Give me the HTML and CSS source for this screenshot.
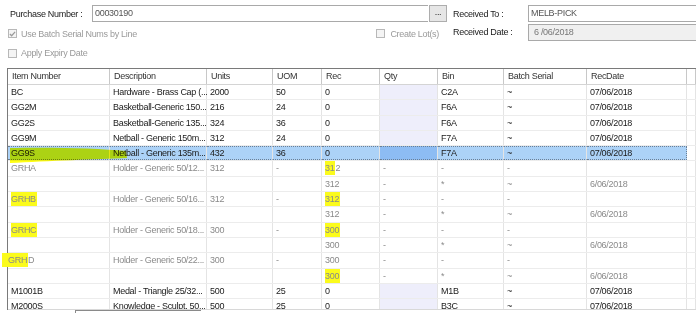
FILE: index.html
```html
<!DOCTYPE html>
<html lang="en">
<head>
    <meta charset="UTF-8">
    <title>Receive Purchase</title>
    <link rel="stylesheet" href="styles.css">
</head>
<body>
    <div class="form">
        <div class="frow r1">
            <div class="left">
                <span class="lbl first">Purchase Number :</span>
                <div class="box po">00030190</div>
                <span class="dots">...</span>
            </div>
            <span class="lbl rlbl">Received To :</span>
            <div class="box">MELB-PICK</div>
        </div>
        <div class="frow r2">
            <div class="left">
                <span class="chk on"><svg width="8" height="8" viewBox="0 0 8 8"><path d="M1 4 L3 6 L7 1.5" fill="none" stroke="#9a9a9a" stroke-width="1.4"/></svg></span>
                <span class="dis">Use Batch Serial Nums by Line</span>
                <span class="chk lot"></span>
                <span class="dis">Create Lot(s)</span>
            </div>
            <span class="lbl rlbl">Received Date :</span>
            <div class="box off">6 /06/2018</div>
        </div>
        <div class="frow r3">
            <span class="chk"></span>
            <span class="dis">Apply Expiry Date</span>
        </div>
    </div>

    <div class="grid">
        <svg class="swoosh" width="130" height="20" viewBox="0 0 130 20">
            <path d="M2 1 C40 0 90 1 118 4 L119 11 C90 12 40 14 2 16 Z" fill="#ffff14"/>
        </svg>
        <div class="row head">
            <span class="c">Item Number</span><span class="c">Description</span><span class="c">Units</span><span class="c">UOM</span><span class="c">Rec</span><span class="c">Qty</span><span class="c">Bin</span><span class="c">Batch Serial</span><span class="c">RecDate</span><span class="c"></span>
        </div>
        <div class="row">
            <span class="c">BC</span><span class="c">Hardware - Brass Cap (...</span><span class="c">2000</span><span class="c">50</span><span class="c">0</span><span class="c qty"></span><span class="c">C2A</span><span class="c">~</span><span class="c">07/06/2018</span><span class="c"></span>
        </div>
        <div class="row">
            <span class="c">GG2M</span><span class="c">Basketball-Generic 150...</span><span class="c">216</span><span class="c">24</span><span class="c">0</span><span class="c qty"></span><span class="c">F6A</span><span class="c">~</span><span class="c">07/06/2018</span><span class="c"></span>
        </div>
        <div class="row">
            <span class="c">GG2S</span><span class="c">Basketball-Generic 135...</span><span class="c">324</span><span class="c">36</span><span class="c">0</span><span class="c qty"></span><span class="c">F6A</span><span class="c">~</span><span class="c">07/06/2018</span><span class="c"></span>
        </div>
        <div class="row">
            <span class="c">GG9M</span><span class="c">Netball - Generic 150m...</span><span class="c">312</span><span class="c">24</span><span class="c">0</span><span class="c qty"></span><span class="c">F7A</span><span class="c">~</span><span class="c">07/06/2018</span><span class="c"></span>
        </div>
        <div class="row sel">
            <span class="c">GG9S</span><span class="c">Netball - Generic 135m...</span><span class="c">432</span><span class="c">36</span><span class="c">0</span><span class="c qty"></span><span class="c">F7A</span><span class="c">~</span><span class="c end">07/06/2018</span><span class="c"></span>
        </div>
        <div class="row grey">
            <span class="c">GRHA</span><span class="c">Holder - Generic 50/12...</span><span class="c">312</span><span class="c">-</span><span class="c"><span class="hl">31</span>2</span><span class="c">-</span><span class="c">-</span><span class="c">-</span><span class="c"></span><span class="c"></span>
        </div>
        <div class="row grey">
            <span class="c"></span><span class="c"></span><span class="c"></span><span class="c"></span><span class="c">312</span><span class="c">-</span><span class="c">*</span><span class="c">~</span><span class="c">6/06/2018</span><span class="c"></span>
        </div>
        <div class="row grey">
            <span class="c"><span class="hl">GRHB</span></span><span class="c">Holder - Generic 50/16...</span><span class="c">312</span><span class="c">-</span><span class="c"><span class="hl">312</span></span><span class="c">-</span><span class="c">-</span><span class="c">-</span><span class="c"></span><span class="c"></span>
        </div>
        <div class="row grey">
            <span class="c"></span><span class="c"></span><span class="c"></span><span class="c"></span><span class="c">312</span><span class="c">-</span><span class="c">*</span><span class="c">~</span><span class="c">6/06/2018</span><span class="c"></span>
        </div>
        <div class="row grey">
            <span class="c"><span class="hl">GRHC</span></span><span class="c">Holder - Generic 50/18...</span><span class="c">300</span><span class="c">-</span><span class="c"><span class="hl">300</span></span><span class="c">-</span><span class="c">-</span><span class="c">-</span><span class="c"></span><span class="c"></span>
        </div>
        <div class="row grey">
            <span class="c"></span><span class="c"></span><span class="c"></span><span class="c"></span><span class="c">300</span><span class="c">-</span><span class="c">*</span><span class="c">~</span><span class="c">6/06/2018</span><span class="c"></span>
        </div>
        <div class="row grey">
            <span class="c"><span class="hl wide">GRH</span>D</span><span class="c">Holder - Generic 50/22...</span><span class="c">300</span><span class="c">-</span><span class="c">300</span><span class="c">-</span><span class="c">-</span><span class="c">-</span><span class="c"></span><span class="c"></span>
        </div>
        <div class="row grey">
            <span class="c"></span><span class="c"></span><span class="c"></span><span class="c"></span><span class="c"><span class="hl">300</span></span><span class="c">-</span><span class="c">*</span><span class="c">~</span><span class="c">6/06/2018</span><span class="c"></span>
        </div>
        <div class="row">
            <span class="c">M1001B</span><span class="c">Medal - Triangle 25/32...</span><span class="c">500</span><span class="c">25</span><span class="c">0</span><span class="c qty"></span><span class="c">M1B</span><span class="c">~</span><span class="c">07/06/2018</span><span class="c"></span>
        </div>
        <div class="row last">
            <span class="c">M2000S</span><span class="c">Knowledge - Sculpt. 50...</span><span class="c">500</span><span class="c">25</span><span class="c">0</span><span class="c qty"></span><span class="c">B3C</span><span class="c">~</span><span class="c">07/06/2018</span><span class="c"></span>
        </div>
    </div>
    <div class="foot">
        <div class="fbox"></div>
    </div>
</body>
</html>
```

FILE: styles.css
```css
body {
    margin: 0;
    font-family: "Liberation Sans", Arial, sans-serif;
    font-size: 9px;
    letter-spacing: -0.3px;
    color: #1a1a1a;
    background: #fff;
    overflow: hidden;
}
.form {
    height: 68px;
    padding-top: 5px;
    box-sizing: border-box;
}
.frow {
    display: flex;
    align-items: center;
}
.r1 {
    height: 17px;
}
.r2 {
    height: 18px;
    margin-top: 1px;
}
.r3 {
    height: 12px;
    margin-top: 6px;
    padding-left: 8px;
}
.left {
    display: flex;
    align-items: center;
    width: 447px;
    flex: none;
}
.r2 .left {
    padding-left: 8px;
    box-sizing: border-box;
    margin-top: 3px;
}
.lbl.first {
    width: 82px;
    padding-left: 10px;
    flex: none;
}
.rlbl {
    width: 75px;
    margin-left: 6px;
    flex: none;
}
.box {
    flex: 1;
    height: 17px;
    border: 1px solid #a9a9a9;
    border-right: none;
    box-sizing: border-box;
    padding-left: 2px;
    line-height: 15px;
    color: #555;
}
.box.po {
    flex: none;
    width: 336px;
}
.box.off {
    background: #f0f0f0;
    color: #777;
    padding-left: 5px;
}
.dots {
    width: 18px;
    height: 17px;
    margin-left: 1px;
    border: 1px solid #adadad;
    background: #e6e6e6;
    box-sizing: border-box;
    text-align: center;
    line-height: 13px;
}
.chk {
    width: 9px;
    height: 9px;
    border: 1px solid #b8b8b8;
    background: #f4f4f4;
    box-sizing: border-box;
    display: flex;
    align-items: center;
    justify-content: center;
    flex: none;
    margin-right: 4px;
}
.chk svg {
    display: block;
}
.chk.lot {
    margin-left: auto;
    margin-right: 5px;
}
.r2 .left .dis:last-child {
    margin-right: 8px;
}
.dis {
    color: #9a9a9a;
}

.grid {
    position: relative;
    margin-left: 7px;
    border-top: 1px solid #7a7a7a;
    border-left: 1px solid #7a7a7a;
}
.row {
    display: grid;
    grid-template-columns: 102px 97px 66px 49px 58px 58px 66px 83px 100px 1fr;
    height: 15.3px;
    border-bottom: 1px solid #ececec;
    box-sizing: border-box;
    white-space: nowrap;
}
.c {
    border-right: 1px solid #e4e4e4;
    padding-left: 3px;
    line-height: 14px;
}
.head {
    height: 16px;
    border-bottom: 1px solid #d4d4d4;
}
.head .c {
    border-right-color: #c8c8c8;
    color: #333;
    padding-left: 4px;
}
.qty {
    background: #eeeefb;
}
.grey .c {
    color: #8a8a8a;
}
.sel .c {
    background: #acd2f7;
    border-top: 1px dotted #6b7f95;
    border-bottom: 1px dotted #6b7f95;
    line-height: 12px;
}
.sel .qty {
    background: #8dbcf3;
}
.sel .end {
    border-right: 1px dotted #6b7f95;
}
.sel .c:last-child {
    background: #fff;
    border-top: none;
    border-bottom: none;
}
.hl {
    background: #fbfb1c;
    padding: 2px 1px 2px 0;
}
.hl.wide {
    margin-left: -9px;
    padding-left: 6px;
}
.last {
    height: 11px;
    overflow: hidden;
    border-bottom: 1px solid #d8d8d8;
}
.swoosh {
    position: absolute;
    left: 0;
    top: 78px;
    mix-blend-mode: multiply;
}
.foot {
    display: flex;
    height: 10px;
    padding-left: 75px;
}
.fbox {
    width: 125px;
    height: 10px;
    border-top: 1px solid #8a8a8a;
    border-left: 1px solid #8a8a8a;
}
```
